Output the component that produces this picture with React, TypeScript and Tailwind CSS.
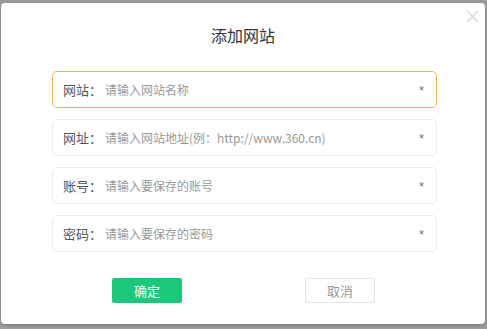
import React from 'react';

const fields = [
  { label: '网站', placeholder: '请输入网站名称', active: true },
  { label: '网址', placeholder: '请输入网站地址(例：http://www.360.cn)', active: false },
  { label: '账号', placeholder: '请输入要保存的账号', active: false },
  { label: '密码', placeholder: '请输入要保存的密码', active: false },
];

const App: React.FC = () => {
  return (
    <div
      className="h-[329px] w-[487px] bg-[#9c9c9c] pt-[3px] pl-[1px] pr-[2px] pb-[5px]"
      style={{ fontFamily: '"Noto Sans CJK SC", "Noto Sans", sans-serif' }}
    >
      <div className="relative h-full rounded-[4px] bg-white shadow-[0_1px_3px_rgba(0,0,0,0.25)]">
        {/* close */}
        <button className="absolute right-[6px] top-[6px] flex h-[14px] w-[14px] items-center justify-center">
          <svg width="13" height="13" viewBox="0 0 13 13" fill="none" stroke="#d4d4d4" strokeWidth="1.3">
            <path d="M1 1L12 12M12 1L1 12" />
          </svg>
        </button>

        <h1 className="pt-[21px] text-center text-[16px] leading-[22px] text-[#333]">添加网站</h1>

        <div className="mt-[25px] flex flex-col gap-[11px] pl-[51px]">
          {fields.map(f => (
            <div
              key={f.label}
              className={
                f.active
                  ? 'flex h-[37px] w-[385px] items-center rounded-[5px] border border-[#f0b15c] px-[10px] text-[13px]'
                  : 'flex h-[37px] w-[385px] items-center rounded-[5px] border border-[#ececec] px-[10px] text-[13px]'
              }
            >
              <span className="w-[42px] shrink-0 text-[#555]">{f.label}：</span>
              <span className="flex-1 text-[12px] text-[#999]">{f.placeholder}</span>
              <span className="mr-[2px] mt-[1px] text-[13px] leading-none text-[#777]" style={{ fontFamily: '"Liberation Sans", sans-serif' }}>*</span>
            </div>
          ))}
        </div>

        <div className="mt-[26px] flex justify-center gap-[123px] pl-[1px]">
          <button className="h-[25px] w-[70px] rounded-[2px] bg-[#1ec87a] text-[13px] text-white">确定</button>
          <button className="h-[25px] w-[70px] rounded-[2px] border border-[#e3e3e3] bg-white text-[13px] text-[#999]">取消</button>
        </div>
      </div>
    </div>
  );
};

export default App;
